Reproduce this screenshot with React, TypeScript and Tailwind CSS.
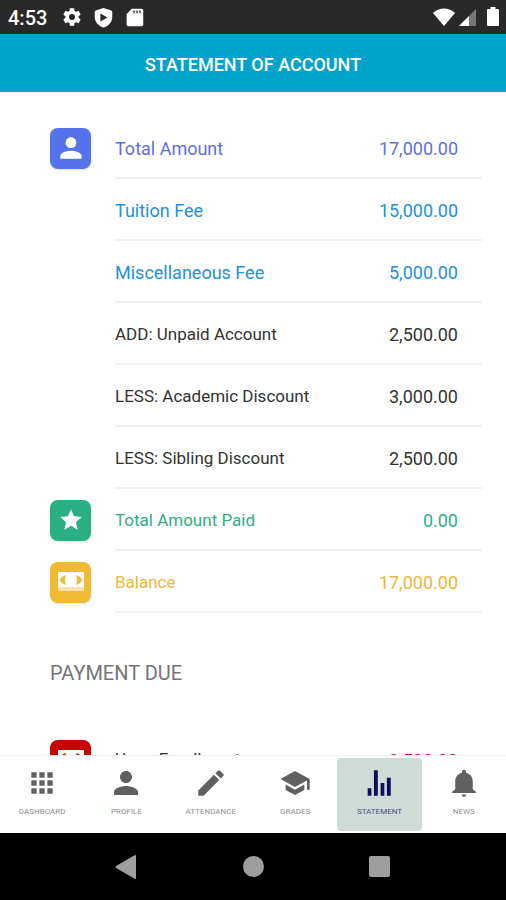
import type { ReactNode } from "react";

type Row = {
  label: string;
  amount: string;
  color: string;
  size: string;
  icon?: ReactNode;
  tile?: string;
};

function Glyph({ d, className }: { d: string; className: string }) {
  return (
    <svg viewBox="0 0 24 24" fill="currentColor" aria-hidden="true" className={className}>
      <path d={d} />
    </svg>
  );
}

const PERSON =
  "M12 12c2.21 0 4-1.79 4-4s-1.79-4-4-4-4 1.79-4 4 1.79 4 4 4zm0 2c-2.67 0-8 1.34-8 4v2h16v-2c0-2.66-5.33-4-8-4z";
const STAR =
  "M12 17.27 18.18 21l-1.64-7.03L22 9.24l-7.19-.61L12 2 9.19 8.63 2 9.24l5.46 4.73L5.82 21z";
const GEAR =
  "M19.14 12.94c.04-.3.06-.61.06-.94 0-.32-.02-.64-.07-.94l2.03-1.58a.49.49 0 0 0 .12-.61l-1.92-3.32a.488.488 0 0 0-.59-.22l-2.39.96c-.5-.38-1.03-.7-1.62-.94l-.36-2.54a.484.484 0 0 0-.48-.41h-3.84c-.24 0-.43.17-.47.41l-.36 2.54c-.59.24-1.13.57-1.62.94l-2.39-.96c-.22-.08-.47 0-.59.22L2.74 8.87c-.12.21-.08.47.12.61l2.03 1.58c-.05.3-.09.63-.09.94s.02.64.07.94l-2.03 1.58a.49.49 0 0 0-.12.61l1.92 3.32c.12.22.37.29.59.22l2.39-.96c.5.38 1.03.7 1.62.94l.36 2.54c.05.24.24.41.48.41h3.84c.24 0 .44-.17.47-.41l.36-2.54c.59-.24 1.13-.56 1.62-.94l2.39.96c.22.08.47 0 .59-.22l1.92-3.32c.12-.22.07-.47-.12-.61l-2.01-1.58zM12 15.3a3.3 3.3 0 1 1 0-6.6 3.3 3.3 0 0 1 0 6.6z";

function Banknote() {
  return (
    <svg viewBox="0 0 26 20" aria-hidden="true" className="h-5 w-[26px]">
      <path fill="#fff" d="M0 0h26v15H0z" />
      <path fill="currentColor" d="M8 3C5 4 2 6 2 8s3 4 6 5C6.500 9 6.500 7 8 3zM18 3c3 1 6 3 6 5s-3 4-6 5c1.500-4 1.500-6 0-10z" />
      <path fill="#fff" fillOpacity=".6" d="M0 15h26v4H0z" />
    </svg>
  );
}

const FEES: Row[] = [
  { label: "Total Amount", amount: "17,000.00", color: "text-[#5f6ee0]", size: "pt-1 text-[18px]", tile: "bg-[#5573ea]", icon: <Glyph d={PERSON} className="size-8 text-white" /> },
  { label: "Tuition Fee", amount: "15,000.00", color: "text-[#2391dc]", size: "pt-1 text-[18px]" },
  { label: "Miscellaneous Fee", amount: "5,000.00", color: "text-[#2391dc]", size: "pt-1 text-[18px]" },
  { label: "ADD: Unpaid Account", amount: "2,500.00", color: "text-[#333333]", size: "pt-0.5 text-[17px]" },
  { label: "LESS: Academic Discount", amount: "3,000.00", color: "text-[#333333]", size: "pt-0.5 text-[17px]" },
  { label: "LESS: Sibling Discount", amount: "2,500.00", color: "text-[#333333]", size: "pt-0.5 text-[17px]" },
  { label: "Total Amount Paid", amount: "0.00", color: "text-[#2fae84]", size: "pt-0.5 text-[17px]", tile: "bg-[#2aae84]", icon: <Glyph d={STAR} className="size-[26px] text-white" /> },
  { label: "Balance", amount: "17,000.00", color: "text-[#edb83a]", size: "pt-0.5 text-[17px]", tile: "bg-[#f0ba32] text-[#f0ba32]", icon: <Banknote /> },
];

const DUES: Row[] = [
  { label: "Upon Enrollment", amount: "3,500.00", color: "text-[#333333]", size: "text-[17px]", tile: "bg-[#c80000] text-[#c80000]", icon: <Banknote /> },
];

function Ledger({ rows, label, amountColor }: { rows: Row[]; label: string; amountColor?: string }) {
  return (
    <table aria-label={label} className="w-full border-separate border-spacing-0 leading-6">
      <tbody>
        {rows.map((row) => (
          <tr key={row.label} className={`h-[62px] ${row.color}`}>
            <td className="w-[65px] p-0 align-middle">
              {row.icon && (
                <div className={`flex size-[41px] items-center justify-center rounded-lg shadow ${row.tile}`}>
                  {row.icon}
                </div>
              )}
            </td>
            <th scope="row" className={`border-b-2 border-[#f1f1f1] p-0 text-left font-normal ${row.size}`}>
              {row.label}
            </th>
            <td className={`border-b-2 border-[#f1f1f1] p-0 pr-6 pt-1 text-right text-[18px] ${amountColor ?? ""}`}>
              {row.amount}
            </td>
          </tr>
        ))}
      </tbody>
    </table>
  );
}

const TABS = [
  { name: "DASHBOARD", size: "size-8", d: "M4 8h4V4H4v4zm6 12h4v-4h-4v4zm-6 0h4v-4H4v4zm0-6h4v-4H4v4zm6 0h4v-4h-4v4zm6-10v4h4V4h-4zm-6 4h4V4h-4v4zm6 6h4v-4h-4v4zm0 6h4v-4h-4v4z" },
  { name: "PROFILE", size: "size-9", d: PERSON },
  { name: "ATTENDANCE", size: "size-[34px]", d: "M3 17.25V21h3.75L17.81 9.94l-3.75-3.75L3 17.25zM20.71 7.04a1 1 0 0 0 0-1.41l-2.34-2.34a1 1 0 0 0-1.41 0l-1.83 1.83 3.75 3.75 1.83-1.83z" },
  { name: "GRADES", size: "size-8", d: "M5 13.18v4L12 21l7-3.82v-4L12 17l-7-3.82zM12 3 1 9l11 6 9-4.91V17h2V9L12 3z" },
  { name: "STATEMENT", size: "size-8", d: "M3.500 16h2.800v5.500H3.500zM8.200 2.500h2.900v19H8.200zM13.200 12h2.800v9.500h-2.800zM17.900 8h2.900v13.500h-2.900z", active: true },
  { name: "NEWS", size: "size-[30px]", d: "M12 23c1.100 0 1.700-.9 1.700-1.900h-3.400c0 1 .6 1.900 1.700 1.900zM19 17v-6.500c0-3.500-2-6-5.400-6.800V3a1.600 1.600 0 0 0-3.200 0v.7C7 4.500 5 7 5 10.500V17l-2.500 2v1h19v-1z" },
];

export default function App() {
  return (
    <div className="flex h-screen flex-col bg-white font-[Roboto,sans-serif]">
      <div className="flex h-[34px] shrink-0 items-center bg-[#292929] pl-2 pr-1.5 text-white">
        <span className="pt-0.5 text-[20px] font-medium">4:53</span>
        <Glyph d={GEAR} className="ml-3.5 size-[22px]" />
        <svg viewBox="0 0 24 24" aria-hidden="true" className="ml-2.5 size-[21px]">
          <path fill="currentColor" d="M12 1 3 4Q2 4.500 2 6v5c0 6 4 10.500 10 12.500 6-2 10-6.500 10-12.500V6q0-1.500-1-2z" />
          <path fill="#292929" d="M8.500 7.500v9l8-4.500z" />
        </svg>
        <svg viewBox="0 0 24 24" aria-hidden="true" className="ml-2.5 size-[21px]">
          <path fill="currentColor" d="M20 2H9L3 8v12c0 1.100.9 2 2 2h15c1.100 0 2-.9 2-2V4c0-1.100-.9-2-2-2z" />
          <path fill="#777" d="M10 4h2.500v3H10zM13.500 4H16v3h-2.500zM17 4h2.500v3H17z" />
        </svg>
        <svg viewBox="0 0 24 20" aria-hidden="true" className="ml-auto h-5 w-6">
          <path fill="currentColor" d="M12 19 1 6C4 3 8 1.500 12 1.500S20 3 23 6z" />
        </svg>
        <svg viewBox="0 0 20 20" aria-hidden="true" className="ml-0.5 size-5">
          <path fill="#777" d="M18 2v17H1z" />
          <path fill="currentColor" d="M11 9v10H1z" />
        </svg>
        <svg viewBox="0 0 14 22" aria-hidden="true" className="ml-2 h-[22px] w-3.5">
          <path fill="currentColor" d="M4.500 1h5v2H12q1 0 1 1v15q0 1-1 1H2q-1 0-1-1V4q0-1 1-1h2.500z" />
        </svg>
      </div>

      <header className="flex h-[58px] shrink-0 items-center justify-center bg-[#02a3ca] pt-0.5">
        <h1 className="text-[18px] font-medium text-white">STATEMENT OF ACCOUNT</h1>
      </header>

      <main className="min-h-0 flex-1 overflow-y-auto pl-[50px] pr-6 pt-[25px] [scrollbar-width:none]">
        <Ledger rows={FEES} label="Statement of account" />
        <h2 className="mb-7 mt-8 flex h-14 items-center text-[20px] text-[#757575]">PAYMENT DUE</h2>
        <Ledger rows={DUES} label="Payment due" amountColor="text-[#c8102e]" />
      </main>

      <nav className="flex h-[78px] shrink-0 border-t border-[#f0f0f0] bg-white py-[2px]">
        {TABS.map((tab) => (
          <button
            key={tab.name}
            type="button"
            aria-current={tab.active ? "page" : undefined}
            className={`flex min-w-0 flex-1 flex-col items-center rounded-sm pt-2 text-[8px] ${
              tab.active ? "bg-[#d0dbd7] text-[#0c0c5c]" : "text-[#606060]"
            }`}
          >
            <span className="flex h-[34px] items-center justify-center">
              <Glyph d={tab.d} className={`shrink-0 ${tab.size}`} />
            </span>
            <span className="mt-1.5 leading-3 opacity-70">{tab.name}</span>
          </button>
        ))}
      </nav>

      <div className="flex h-[67px] shrink-0 items-center bg-black px-[63px] text-[#9e9e9e]">
        <button type="button" aria-label="Back" className="flex flex-1 justify-center">
          <svg viewBox="0 0 22 24" aria-hidden="true" className="h-6 w-[22px]">
            <path fill="currentColor" d="M20 0q1 0 1 1v22q0 1-1 1L1 13q-1-1 0-2z" />
          </svg>
        </button>
        <button type="button" aria-label="Home" className="flex flex-1 justify-center">
          <span className="size-[21px] rounded-full bg-[#9e9e9e]" />
        </button>
        <button type="button" aria-label="Recent apps" className="flex flex-1 justify-center">
          <span className="size-[21px] rounded-xs bg-[#9e9e9e]" />
        </button>
      </div>
    </div>
  );
}
